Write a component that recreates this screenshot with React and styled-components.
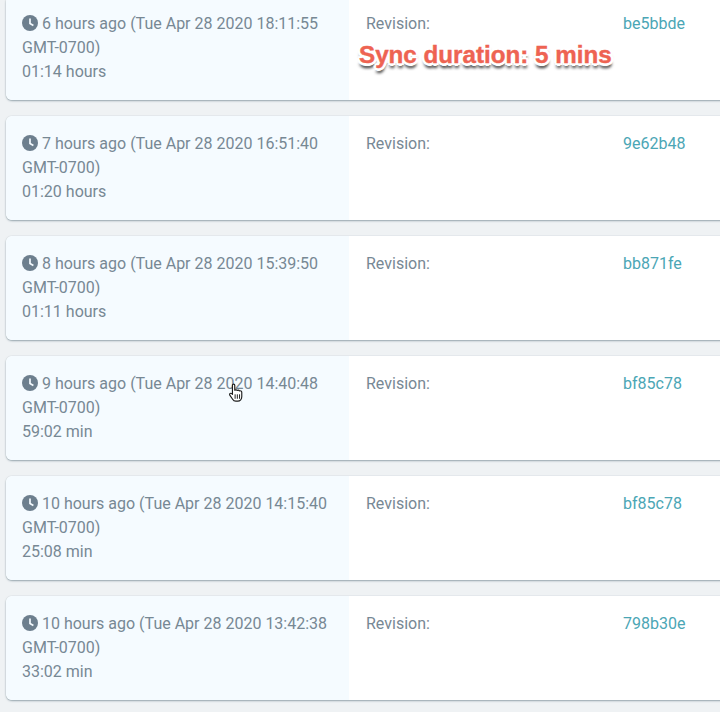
import React from 'react';
import styled, { createGlobalStyle } from 'styled-components';

const runs = [
  { ago: '6 hours ago', date: 'Tue Apr 28 2020 18:11:55', took: '01:14 hours', revision: 'be5bbde' },
  { ago: '7 hours ago', date: 'Tue Apr 28 2020 16:51:40', took: '01:20 hours', revision: '9e62b48' },
  { ago: '8 hours ago', date: 'Tue Apr 28 2020 15:39:50', took: '01:11 hours', revision: 'bb871fe' },
  { ago: '9 hours ago', date: 'Tue Apr 28 2020 14:40:48', took: '59:02 min', revision: 'bf85c78' },
  { ago: '10 hours ago', date: 'Tue Apr 28 2020 14:15:40', took: '25:08 min', revision: 'bf85c78' },
  { ago: '10 hours ago', date: 'Tue Apr 28 2020 13:42:38', took: '33:02 min', revision: '798b30e' },
];

const ClockIcon = () => (
  <Clock viewBox="0 0 16 16">
    <circle cx="8" cy="8" r="8" fill="#6d7f8e" />
    <path d="M8 3.4V8.4L11.4 10.4" fill="none" stroke="#f5fbff" strokeWidth="1.7" />
  </Clock>
);

const HandIcon = () => (
  <Hand viewBox="0 0 18 22">
    <path
      d="M5 2.2c0-1.6 2.6-1.6 2.6 0v5.6c1.3-.5 2.3-.3 2.8.3 1-.4 2-.2 2.5.5 1.2-.3 2.6.3 2.6 1.8v4.6c0 2.800-1.800 5.200-4.600 5.200H8.800c-1.800 0-2.800-.8-3.600-2.200L2 13.400c-.8-1.400 1-2.800 2.200-1.600L5 12.600z"
      fill="#fff"
      stroke="#1d1d1d"
      strokeWidth="1.3"
      strokeLinejoin="round"
    />
    <path d="M8 12.500v5M10.500 12.500v5M13 12.500v5" stroke="#1d1d1d" strokeWidth="1.100" />
  </Hand>
);

const App = () => (
  <>
    <GlobalStyle />
    <Page>
      {runs.map((run) => (
        <RunCard key={run.date}>
          <Summary>
            <ClockIcon />
            {' '}{run.ago} ({run.date} GMT-0700)
            <br />
            {run.took}
          </Summary>
          <Details>
            <DetailLabel>Revision:</DetailLabel>
            <RevisionLink>{run.revision}</RevisionLink>
          </Details>
        </RunCard>
      ))}
      <Caption>Sync duration: 5 mins</Caption>
      <HandIcon />
    </Page>
  </>
);

const GlobalStyle = createGlobalStyle`
  html, body {
    margin: 0;
    height: 100%;
    overflow: hidden;
    background: #eff2f4;
  }
`;

const Page = styled.div`
  position: relative;
  width: 720px;
  height: 716px;
  overflow: hidden;
  box-sizing: border-box;
  margin-top: -4px;
  padding-left: 6px;
  display: flex;
  flex-direction: column;
  gap: 16px;
  font-family: Roboto, "Liberation Sans", sans-serif;
  font-size: 16px;
  line-height: 24px;
  color: #778894;
`;

const RunCard = styled.div`
  flex: none;
  width: 760px;
  height: 104px;
  display: flex;
  background: #fff;
  border-radius: 6px;
  overflow: hidden;
  box-shadow: 0 0 1px rgba(120, 140, 150, 0.35), 0 1px 2px rgba(120, 140, 150, 0.75);
`;

const Summary = styled.div`
  flex: none;
  width: 343px;
  box-sizing: border-box;
  padding: 16px 16px 16px 16px;
  background: #f5fbff;
`;

const Clock = styled.svg`
  width: 16px;
  height: 16px;
  vertical-align: -2px;
`;

const Details = styled.div`
  flex: 1;
  display: flex;
  padding: 16px 0 0 17px;
`;

const DetailLabel = styled.span`
  width: 257px;
`;

const RevisionLink = styled.a`
  color: #4ba6b5;
`;

const Caption = styled.div`
  position: absolute;
  left: 359px;
  top: 43px;
  font-family: "Liberation Sans", Arial, sans-serif;
  font-weight: 700;
  font-size: 24.2px;
  line-height: 32px;
  white-space: nowrap;
  color: #ee6352;
  -webkit-text-stroke: 0.4px #ee6352;
  text-shadow:
    3px 0 0 #fff, -3px 0 0 #fff, 0 3px 0 #fff, 0 -3px 0 #fff,
    2px 2px 0 #fff, -2px 2px 0 #fff, 2px -2px 0 #fff, -2px -2px 0 #fff,
    1px 5px 3px rgba(0, 0, 0, 0.65), -1px 5px 3px rgba(0, 0, 0, 0.35);
`;

const Hand = styled.svg`
  position: absolute;
  left: 228px;
  top: 387px;
  width: 16px;
  height: 20px;
`;

export default App;
